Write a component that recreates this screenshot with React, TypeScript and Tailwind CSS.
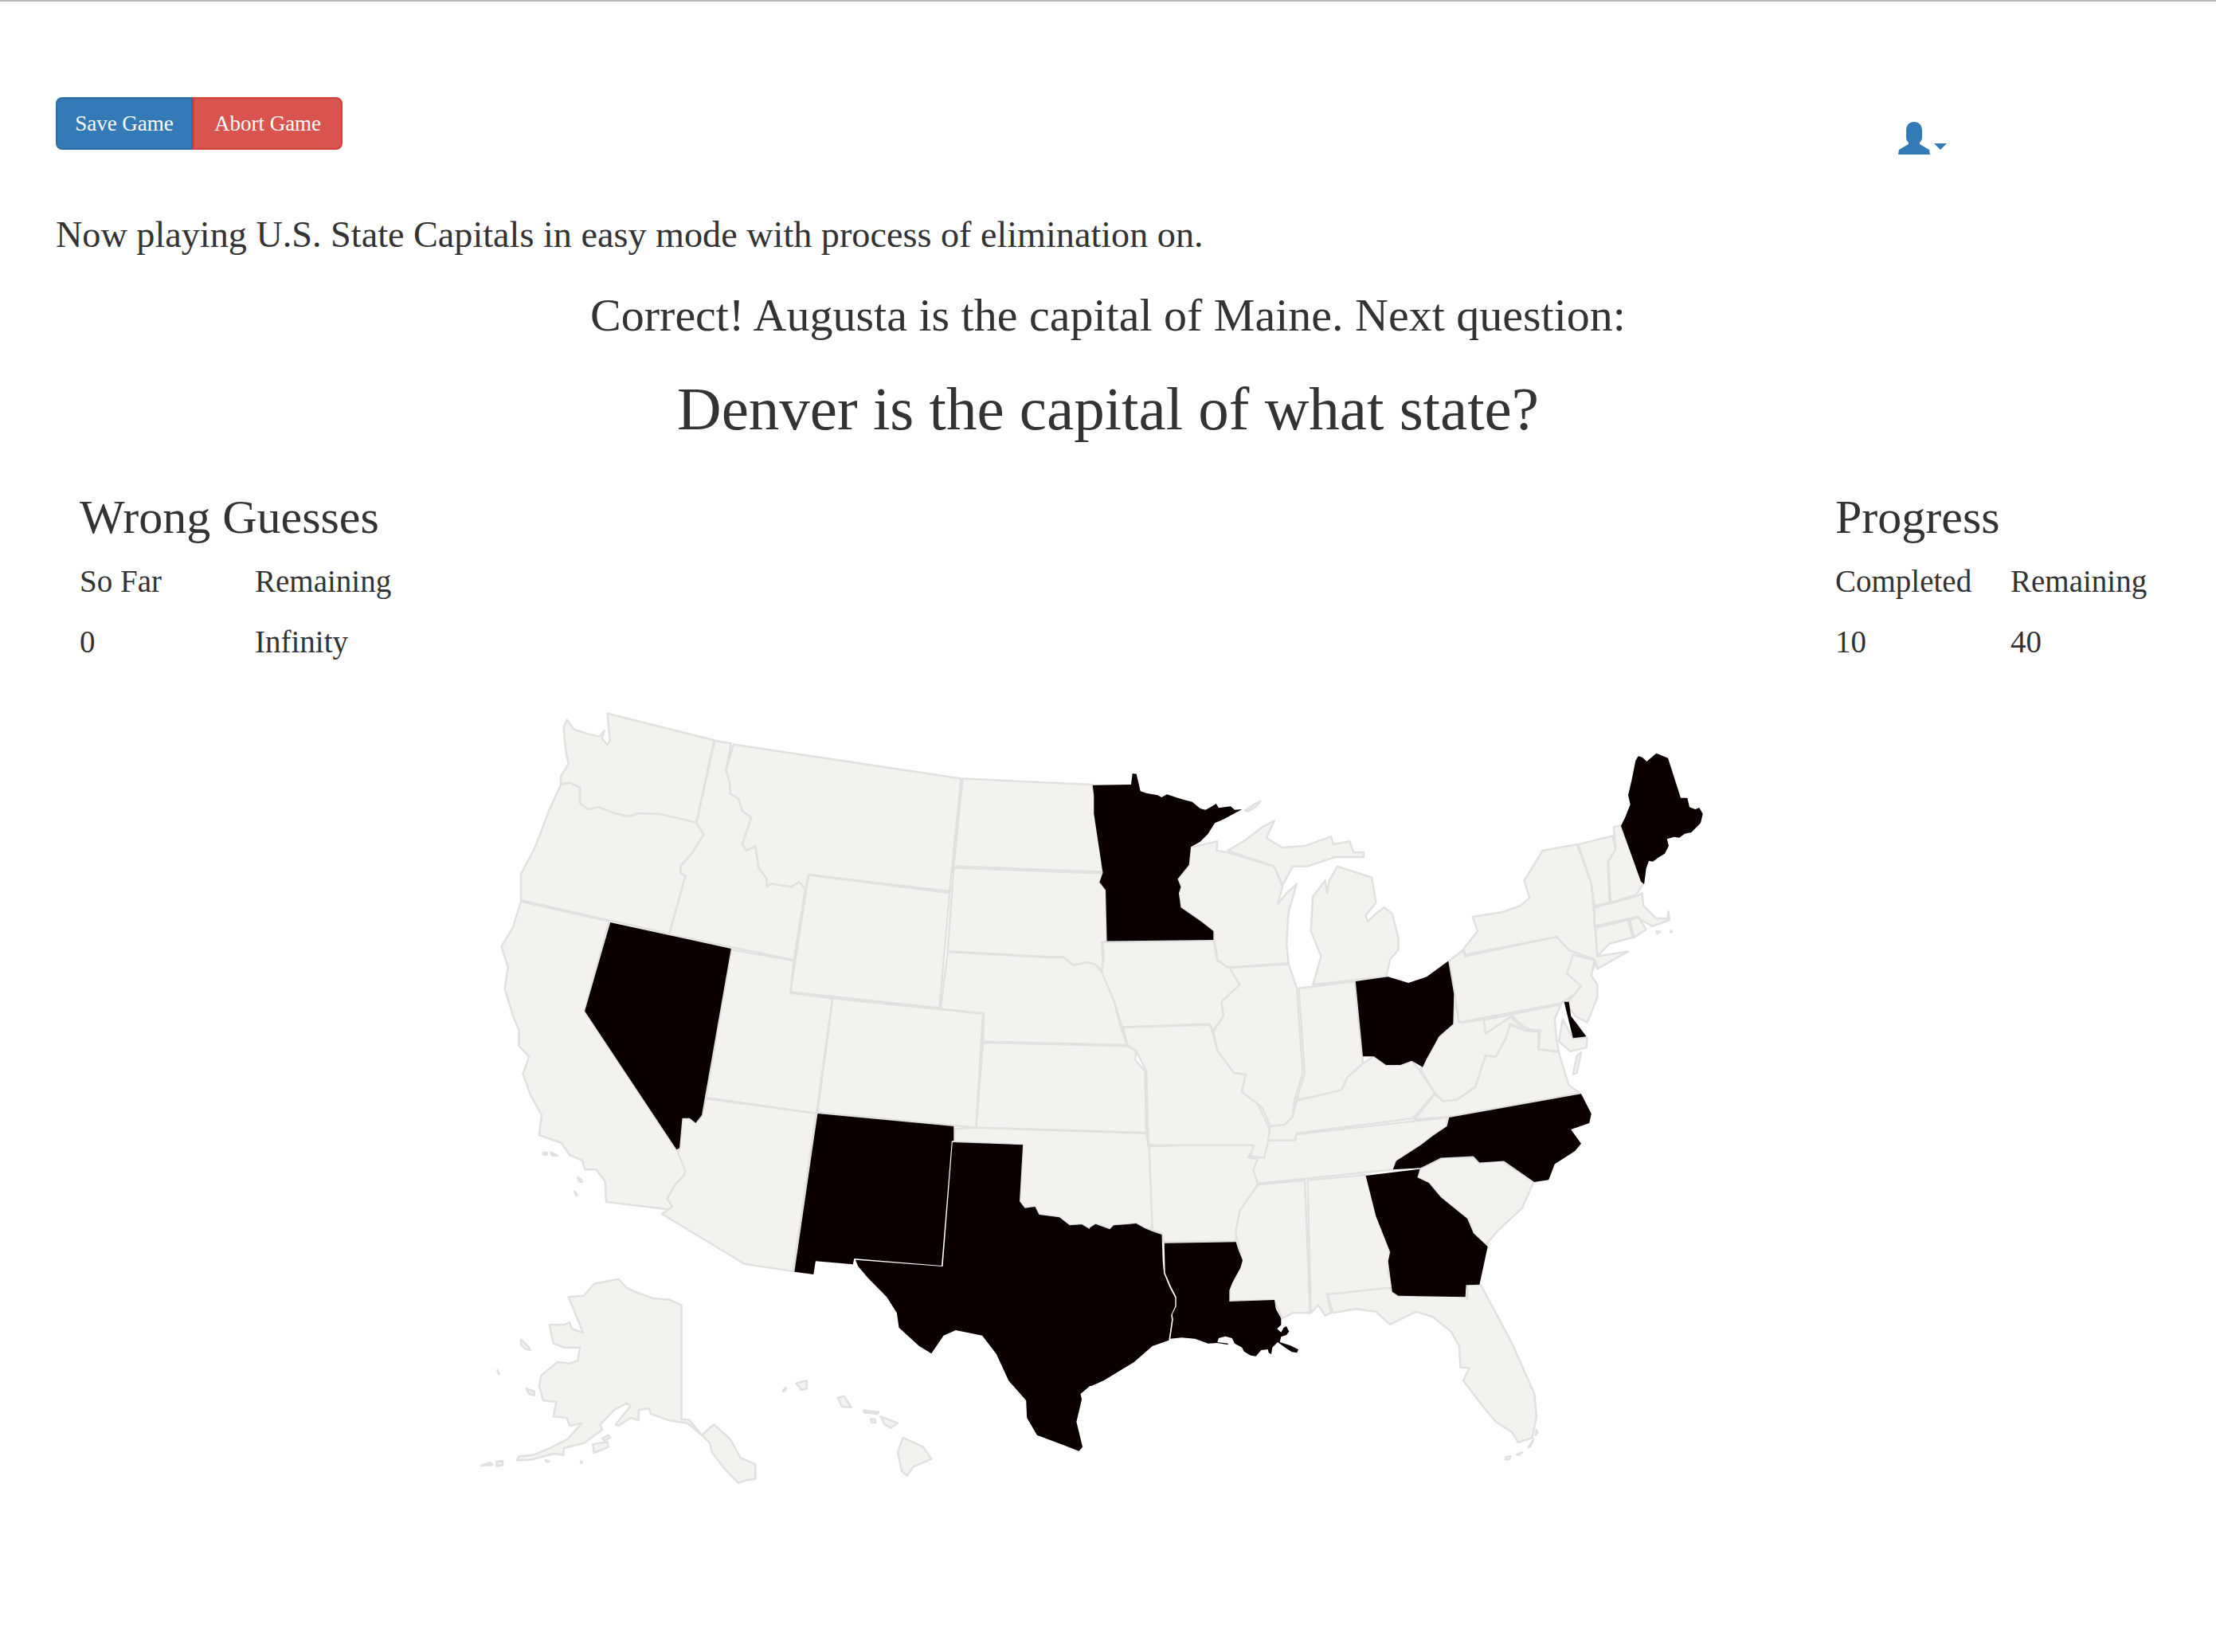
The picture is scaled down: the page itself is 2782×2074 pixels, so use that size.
import React from "react";

const scales: Record<string, [number, number, number, number]> = {
  A: [580, 870, 1.96, 2.529],
  B: [1360, 900, 1.96, 2.529],
  C: [580, 1400, 1.96, 3],
  D: [1360, 1400, 1.96, 3],
  E: [2020, 930, 3, 3],
  F: [1460, 1550, 3, 3],
  G: [1370, 965, 3, 3],
};

function toPath(spec: string): string {
  const tokens = spec.trim().split(/\s+/);
  let cur = scales.A;
  const pts: string[] = [];
  let i = 0;
  while (i < tokens.length) {
    if (scales[tokens[i]]) {
      cur = scales[tokens[i]];
      i += 1;
    } else {
      const x = cur[0] + Number(tokens[i]) / cur[2];
      const y = cur[1] + Number(tokens[i + 1]) / cur[3];
      pts.push(x.toFixed(1) + " " + y.toFixed(1));
      i += 2;
    }
  }
  return "M" + pts.join("L") + "Z";
}

const lightStates = [
  "A 358 65 620 150 577 412 490 385 435 382 410 392 375 382 335 362 310 370 290 350 290 300 265 285 243 290 243 265 262 225 255 180 250 110 258 85 275 115 310 130 338 138 350 120 345 145 358 165 364 150 360 100",
  "A 243 292 265 285 290 300 290 350 310 370 335 362 375 382 410 392 435 382 490 385 577 412 595 450 565 510 538 550 538 572 550 580 510 765 145 658 145 575 180 490 215 370",
  "A 145 662 362 725 302 1010 528 1450 C 532 140 550 210 545 230 525 260 505 315 518 345 505 355 355 327 352 250 330 205 303 205 295 170 265 150 245 105 190 75 A 196 1340 170 1280 150 1210 165 1155 140 1120 140 1070 127 1030 105 940 113 870 97 805 125 745",
  "A 622 152 662 160 650 245 660 290 660 320 680 335 690 375 712 395 690 480 700 500 722 485 730 555 750 590 750 615 760 605 810 615 830 600 845 620 817 848 510 767 550 580 538 572 538 550 565 510 595 450 577 412",
  "A 668 163 1228 272 1200 630 853 577 845 622 830 600 810 615 760 605 750 615 750 590 730 555 722 485 700 500 690 480 712 395 690 375 680 335 660 320 660 290 650 245",
  "A 1232 272 B 22 215 38 330 48 492 A 1210 550",
  "A 1210 555 B 48 497 40 525 55 550 58 712 45 715 50 810 30 787 A 1540 855 1505 865 1480 838 1450 838 1195 820",
  "A 853 578 1200 635 1175 1000 808 950",
  "A 817 850 662 815 600 1285 872 1335 912 970 808 952",
  "A 912 970 1282 1018 1265 1380 875 1332",
  "A 1195 822 1450 840 1480 840 1505 865 1540 855 B 30 787 48 815 75 900 92 985 108 1042 A 1282 1107 1284 1018 1178 1003",
  "A 1282 1110 B 108 1045 130 1060 128 1090 152 1125 155 1320 A 1265 1380",
  "C 1212 52 1265 47 D 155 68 170 200 170 435 150 425 130 408 105 412 75 415 65 430 30 410 15 425 C 1545 430 1525 412 1495 415 1470 385 1420 375 1410 345 1385 350 1372 325 1380 112 1210 100",
  "A 600 1288 590 1345 575 1365 560 1350 542 1350 535 1450 C 532 145 550 210 545 230 525 260 505 315 518 345 492 372 695 560 815 588 872 -6",
  "D 162 118 412 105 420 130 405 160 435 165 425 225 430 258 405 320 385 370 375 475 197 478 193 445 170 435",
  "D 430 262 545 245 558 745 515 745 490 765 470 698 360 700 360 640 390 548 375 440 385 360 405 315",
  "D 552 245 695 225 755 520 750 590 765 650 600 678 610 745 595 755 578 715 560 745",
  "D 600 675 752 650 775 682 940 672 945 692 945 640 978 640 1055 860 1110 1050 1115 1135 1105 1215 1070 1232 1055 1195 1015 1155 985 1100 935 1000 950 952 928 950 925 870 905 815 860 760 820 740 755 788 720 740 670 730 615 745",
  "D 830 200 885 160 960 158 975 180 1030 172 1108 252 1080 350 1020 435 990 490 960 445 945 390 880 310 850 255 822 235",
  "B 455 1345 522 1342 525 1325 895 1272 895 1300 860 1330 830 1360 770 1410 762 1437 430 1482 418 1440 430 1400",
  "B 97 985 312 978 320 1010 330 1060 365 1105 370 1130 400 1135 390 1190 430 1230 455 1300 460 1320 445 1400 410 1395 420 1360 160 1360 155 1125 130 1060 108 1040",
  "B 48 715 320 710 330 775 360 795 385 850 340 905 345 950 320 995 310 975 95 985 75 900 45 810 50 760",
  "B 262 415 330 395 328 425 355 430 470 475 490 540 478 595 500 560 525 530 505 620 500 720 505 782 355 795 330 770 320 680 290 650 240 605 235 560 240 540 232 515 260 470",
  "B 355 425 400 390 440 350 470 330 450 385 490 415 545 410 610 380 615 405 655 395 665 430 690 430 690 445 620 445 550 475 515 475 490 535 470 475",
  "B 398 298 420 278 436 268 425 285 405 300",
  "B 625 475 710 510 720 590 695 630 700 650 720 625 740 605 760 625 775 700 775 740 755 770 745 825 565 850 585 760 560 680 565 570 595 520 600 560 605 520",
  "B 360 797 505 785 525 860 540 1130 520 1215 515 1270 495 1295 460 1300 440 1240 390 1190 400 1135 370 1130 330 1060 320 1000 345 950 340 905 385 850",
  "B 530 862 668 840 688 1100 650 1145 635 1185 570 1205 525 1215 545 1130",
  "B 525 1218 570 1205 635 1185 650 1145 688 1100 715 1078 745 1105 780 1105 808 1092 826 1120 865 1195 810 1275 525 1322 520 1345 455 1345 460 1300 495 1295 515 1270",
  "B 912 900 930 972 985 960 990 1005 1050 950 1085 995 1050 975 1040 1020 1015 1080 990 1075 965 1175 920 1215 885 1220 865 1195 830 1120 845 1085 860 1050 875 1015 910 975",
  "B 815 1278 865 1198 885 1220 920 1215 965 1175 990 1075 1015 1080 1040 1020 1050 978 1085 995 1120 1000 1120 1055 1170 1065 1185 1130 1195 1170 1222 1195 900 1270",
  "B 1225 1065 1215 1130 1205 1135 1215 1075",
  "B 985 962 1175 913 1160 960 1165 1030 1170 1062 1120 1055 1125 995 1090 990 1055 950 990 1005",
  "B 1180 960 1205 1022 1240 1018 1238 1050 1198 1062 1170 1030",
  "B 925 970 900 775 935 740 940 760 1165 698 1195 740 1255 770 1258 790 1248 815 1225 855 1205 885 1175 910",
  "B 1205 755 1258 772 1250 822 1265 850 1265 890 1240 970 1210 950 1190 910 1225 855 1190 815",
  "B 940 755 935 738 970 680 958 635 1030 620 1075 600 1098 575 1085 520 1130 425 1215 405 1250 530 1255 600 1265 760 1340 745 1265 800 1258 770 1195 740 1165 698",
  "B 1218 405 1302 378 1310 420 1290 460 1295 590 1258 600 1250 530",
  "B 1305 350 1322 345 1380 525 1360 565 1298 590 1292 460 1310 420",
  "B 1258 605 1365 568 1375 560 1378 600 1410 640 1438 640 1440 618 1442 645 1400 665 1360 635 1258 665",
  "B 1260 670 1340 645 1352 700 1295 720 1265 760",
  "B 1345 645 1365 635 1385 675 1355 700",
  "B 1410 680 1420 682 1412 688",
  "B 1446 678 1449 682 1445 684",
  "C 262 685 300 680 325 635 385 617 405 650 425 665 470 690 510 695 540 715 540 1145 560 1148 590 1205 555 1160 510 1150 465 1125 460 1105 435 1110 435 1150 415 1140 385 1170 378 1165 415 1095 405 1085 375 1110 340 1165 345 1185 300 1235 250 1255 250 1280 225 1275 170 1298 135 1300 140 1285 175 1280 215 1255 260 1220 295 1160 265 1170 258 1140 225 1135 232 1080 200 1075 190 1020 195 980 235 930 265 935 285 925 290 875 250 875 225 860 215 790 250 790 265 780 270 805 298 820 285 770",
  "C 590 1205 620 1165 660 1220 685 1290 722 1315 722 1370 700 1375 680 1385 660 1355 640 1320 615 1270 610 1235",
  "C 322 1240 358 1230 360 1250 325 1272",
  "C 345 1218 360 1205 365 1215 350 1225",
  "C 145 845 165 875 168 885 155 880 145 865",
  "C 158 1030 178 1040 178 1055 165 1050",
  "C 87 960 92 975 90 975",
  "C 47 1320 70 1308 75 1318",
  "C 85 1305 100 1303 100 1318 85 1322",
  "C 205 1298 215 1305 208 1306",
  "C 292 1303 296 1308 292 1310",
  "C 822 1010 848 1000 848 1030 835 1035",
  "C 790 1035 797 1027 797 1035 790 1040",
  "C 925 1065 940 1058 958 1100 935 1098",
  "C 988 1112 1025 1118 1022 1125 990 1120",
  "C 1005 1145 1015 1145 1018 1158 1008 1158",
  "C 1030 1135 1072 1160 1055 1178 1040 1165",
  "C 1085 1215 1135 1250 1155 1295 1110 1325 1095 1358 1082 1340 1072 1270",
  "C 200 140 210 142 208 150 200 148",
  "C 218 140 235 152 222 152",
  "C 285 233 295 245 295 252 288 250",
  "C 277 287 284 300 281 304",
  "D 1040 1287 1052 1285 1048 1296 1038 1297",
  "D 1067 1278 1080 1270 1072 1280",
  "D 1095 1252 1108 1222 1100 1248",
  "D 1115 1185 1118 1195 1113 1205",
];

const darkStates = [
  "A 365 728 662 812 590 1340 575 1365 560 1350 542 1350 535 1445 528 1450 302 1010",
  "C 875 -6 1210 42 1210 95 1205 98 1180 567 965 540 962 562 870 550 865 600 818 590",
  "C 1207 102 1380 112 1372 325 1385 350 1410 345 1420 375 1470 385 1495 415 1525 412 1545 430 D 15 425 30 410 65 430 75 415 105 412 130 408 150 425 170 438 193 450 F -1 100 3 145 25 198 46 238 46 270 31 302 33 322 22 398 D 170 870 125 930 50 1000 20 1020 C 1545 1020 1522 1050 1525 1070 1512 1155 1527 1250 1518 1265 1475 1240 1415 1205 1390 1140 1388 1075 1345 1000 1315 900 1280 830 1215 810 1185 830 1155 898 1125 870 1075 800 1070 745 1045 685 1000 615 975 570 968 545 1183 570",
  "F 5 32 275 28 285 60 300 97 292 125 262 180 250 210 250 252 420 246 425 280 445 315 445 340 430 355 445 368 455 350 465 345 475 365 465 378 445 385 440 405 480 418 510 433 505 445 485 442 460 425 432 405 412 425 408 450 398 445 395 432 370 435 350 458 330 455 305 440 298 425 270 410 260 390 235 383 210 390 205 405 245 410 245 415 205 408 170 410 120 392 70 388 28 392 38 320 35 300 50 270 50 235 30 195 8 145",
  "D 695 228 828 203 822 235 850 255 880 310 945 390 960 445 995 495 975 638 942 640 940 685 775 680 760 665 750 550 755 515 720 380",
  "B 900 1272 1225 1197 1250 1260 1245 1290 1200 1310 1225 1355 1210 1378 1160 1420 1145 1470 1110 1477 1035 1410 975 1415 960 1395 880 1400 830 1432 762 1437 770 1410 830 1360 860 1330 895 1300",
  "B 670 840 750 825 800 845 845 825 898 775 912 880 910 975 875 1015 860 1050 845 1085 835 1112 808 1092 780 1105 745 1105 715 1078 688 1078",
  "B 1183 905 1195 905 1200 950 1238 1015 1205 1020",
  "E 45 320 60 290 80 240 72 205 85 150 100 75 110 58 125 62 142 78 178 47 222 65 270 215 295 215 303 250 325 258 340 252 353 275 345 310 310 345 285 350 265 365 245 362 218 370 225 395 210 425 185 440 165 455 150 452 140 480 132 540 120 530",
  "G 5 62 150 60 155 18 170 20 185 85 210 93 250 100 265 108 285 97 340 115 380 125 410 150 430 155 445 148 470 132 480 148 525 142 540 155 568 153 500 190 465 205 440 245 410 275 375 295 B 260 470 232 515 240 540 235 560 240 605 290 650 320 680 320 708 58 712 55 550 40 525 48 495 G 25 270 10 170 10 100",
];

const maineIslands = [
  "E 233 396 240 398 243 408 236 408",
  "E 268 365 280 360 278 373 270 376",
];

function StatTable({ title, a, b, va, vb, className }: { title: string; a: string; b: string; va: string; vb: string; className: string }) {
  return (
    <div className={className}>
      <h3 className="text-[60px] leading-[60px] font-normal text-[#333]">{title}</h3>
      <div className="grid grid-cols-[220px_220px] mt-[30px] text-[39px] leading-[42px] text-[#333]">
        <div>{a}</div>
        <div>{b}</div>
        <div className="mt-[34px]">{va}</div>
        <div className="mt-[34px]">{vb}</div>
      </div>
    </div>
  );
}

export default function App() {
  return (
    <div className="relative min-h-[2074px] w-[2782px] bg-white border-t-2 border-[#b8b8b8] font-['Liberation_Serif',serif] text-[#333] overflow-hidden">
      <div className="flex justify-between pl-[70px] pr-[337px] pt-[120px]">
        <div className="flex h-[66px] text-[27px] text-white">
          <button className="w-[172px] h-full bg-[#337ab7] border-2 border-[#2e6da4] rounded-l-[8px] flex items-center justify-center">Save Game</button>
          <button className="w-[188px] h-full bg-[#d9534f] border-2 border-[#d43f3a] rounded-r-[8px] flex items-center justify-center">Abort Game</button>
        </div>
        <svg width="62" height="42" viewBox="0 0 62 42" className="mt-[31px] text-[#337ab7]" fill="currentColor">
          <path d="M20 0C13 0 10 5 10 11L10 20C10 23 12 25 13 26L13 28L1 35L0 41L40 41L39 35L27 28L27 26C28 25 30 23 30 20L30 11C30 5 27 0 20 0Z" />
          <path d="M45 27L61 27L53 35Z" />
        </svg>
      </div>
      <p className="mt-[70px] ml-[70px] text-[46.2px] leading-[60px]">Now playing U.S. State Capitals in easy mode with process of elimination on.</p>
      <h3 className="mt-[36px] text-center text-[58px] leading-[70px] font-normal">Correct! Augusta is the capital of Maine. Next question:</h3>
      <h1 className="mt-[37px] text-center text-[77px] leading-[90px] font-normal">Denver is the capital of what state?</h1>
      <div className="flex justify-between mt-[61px]">
        <StatTable className="ml-[100px]" title="Wrong Guesses" a="So Far" b="Remaining" va="0" vb="Infinity" />
        <StatTable className="w-[436px] mr-[42px]" title="Progress" a="Completed" b="Remaining" va="10" vb="40" />
      </div>
      <svg className="mt-[43px] ml-[580px] block" width="1620" height="1010" viewBox="580 870 1620 1010">
        <g fill="#f3f2ef" stroke="#e0e0e0" strokeWidth="2.5" strokeLinejoin="round">
          {lightStates.map((s, i) => (
            <path key={i} d={toPath(s)} />
          ))}
        </g>
        <g fill="#0a0000" stroke="none">
          {darkStates.map((s, i) => (
            <path key={i} d={toPath(s)} />
          ))}
        </g>
        <g fill="#ffffff">
          {maineIslands.map((s, i) => (
            <path key={i} d={toPath(s)} />
          ))}
        </g>
      </svg>
    </div>
  );
}
